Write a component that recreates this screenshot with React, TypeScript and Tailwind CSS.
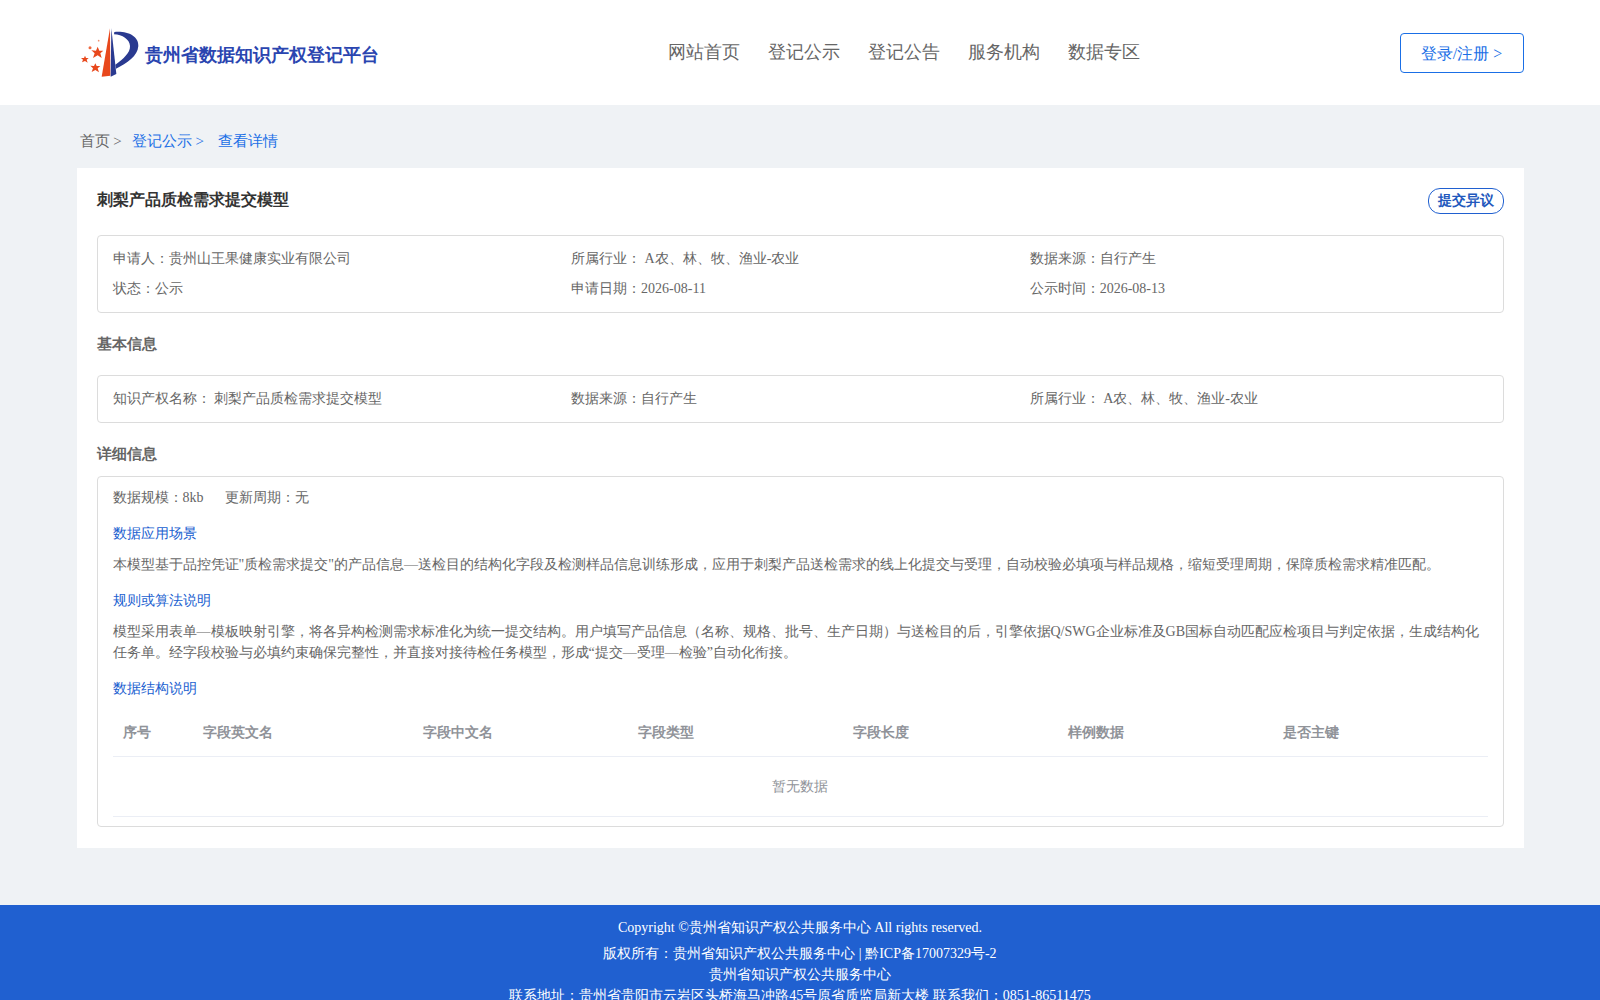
const font = "font-['Liberation_Serif',serif]";

const navItems = ["网站首页", "登记公示", "登记公告", "服务机构", "数据专区"];
const columns = [
  { label: "序号", width: "w-[80px]" },
  { label: "字段英文名", width: "w-[220px]" },
  { label: "字段中文名", width: "w-[215px]" },
  { label: "字段类型", width: "w-[215px]" },
  { label: "字段长度", width: "w-[215px]" },
  { label: "样例数据", width: "w-[215px]" },
  { label: "是否主键", width: "w-[215px]" },
];

const Logo = () => (
  <svg width="66" height="58" viewBox="0 0 198 174" className="shrink-0">
    <path d="M99 13 L74 158 L100 155 Z" fill="#e8481c" />
    <path d="M103 13 L101 158 L118 150 Z" fill="#2a3a90" />
    <path d="M112 24 C150 20 186 36 184 66 C182 96 150 118 117 134 L115 122 C140 104 160 86 159 66 C158 46 136 32 111 31 Z" fill="#2a3a90" />
    <path d="M62 68 L67 80 L79 80 L70 88 L74 102 L62 94 L48 102 L53 88 L43 79 L57 80 Z" fill="#e8481c" />
    <path d="M55 118 L59 126 L70 126 L62 133 L66 145 L55 138 L44 144 L48 133 L40 125 L51 126 Z" fill="#e8481c" />
    <path d="M24 95 L27 102 L35 102 L29 107 L32 116 L24 111 L15 115 L18 107 L12 102 L21 102 Z" fill="#e8481c" />
    <circle cx="39" cy="71" r="4.5" fill="#ee6a42" />
    <circle cx="65" cy="50" r="2.5" fill="#f0906f" />
  </svg>
);

const Cell = ({ children }: { children: React.ReactNode }) => (
  <div className="w-[458.6px] shrink-0 h-[30px] leading-[30px] text-sm text-[#666]">{children}</div>
);

const SubTitle = ({ children }: { children: React.ReactNode }) => (
  <div className="text-sm leading-[21px] text-[#2060d0]">{children}</div>
);

export default function App() {
  return (
    <div className={`${font} min-h-screen bg-[#eff2f5]`}>
      <header className="h-[105px] bg-white">
        <div className="w-[1447px] mx-auto h-full flex items-center">
          <div className="w-[591px] flex items-center">
            <Logo />
            <span className="ml-[2px] pt-[5px] text-lg font-bold text-[#2a45b0]">贵州省数据知识产权登记平台</span>
          </div>
          <nav className="flex gap-7 pb-[2px] text-lg text-[#666]">
            {navItems.map((item) => (
              <a key={item}>{item}</a>
            ))}
          </nav>
          <button className="ml-auto w-[124px] h-10 pt-[2px] rounded border border-[#1a6fe6] text-base text-[#1a6fe6] bg-white">
            登录/注册 &gt;
          </button>
        </div>
      </header>

      <main className="w-[1447px] mx-auto pb-[57px]">
        <div className="h-[63px] flex items-center pl-[3px] pt-[10px] text-[15px] text-[#666]">
          <span>首页 &gt;</span>
          <span className="ml-[10px] text-[#1a6fe6]">登记公示 &gt;</span>
          <span className="ml-[14px] text-[#1a6fe6]">查看详情</span>
        </div>

        <div className="bg-white px-5 pt-5 pb-[21px]">
          <div className="flex items-center justify-between h-[26px]">
            <h1 className="pb-[2px] text-base font-bold text-[#333]">刺梨产品质检需求提交模型</h1>
            <button className="w-[76px] h-[26px] rounded-xl border border-[#2060d0] text-sm font-bold text-[#2258bd]">
              提交异议
            </button>
          </div>

          <div className="mt-[21px] border border-[#dcdcdc] rounded px-[15px] py-2">
            <div className="flex">
              <Cell>申请人：贵州山王果健康实业有限公司</Cell>
              <Cell>所属行业： A农、林、牧、渔业-农业</Cell>
              <Cell>数据来源：自行产生</Cell>
            </div>
            <div className="flex">
              <Cell>状态：公示</Cell>
              <Cell>申请日期：2026-08-11</Cell>
              <Cell>公示时间：2026-08-13</Cell>
            </div>
          </div>

          <h2 className="mt-[21px] text-[15px] leading-[21px] font-bold text-[#666]">基本信息</h2>

          <div className="mt-5 border border-[#dcdcdc] rounded px-[15px] py-2">
            <div className="flex">
              <Cell>知识产权名称： 刺梨产品质检需求提交模型</Cell>
              <Cell>数据来源：自行产生</Cell>
              <Cell>所属行业： A农、林、牧、渔业-农业</Cell>
            </div>
          </div>

          <h2 className="mt-[21px] text-[15px] leading-[21px] font-bold text-[#666]">详细信息</h2>

          <div className="mt-[11px] border border-[#dcdcdc] rounded px-[15px] pt-[10px] pb-[9px] text-sm text-[#666]">
            <div className="flex gap-[21px] leading-[21px]">
              <span>数据规模：8kb</span>
              <span>更新周期：无</span>
            </div>
            <div className="mt-[15px]">
              <SubTitle>数据应用场景</SubTitle>
            </div>
            <p className="mt-[10px] leading-[21px]">
              本模型基于品控凭证"质检需求提交"的产品信息—送检目的结构化字段及检测样品信息训练形成，应用于刺梨产品送检需求的线上化提交与受理，自动校验必填项与样品规格，缩短受理周期，保障质检需求精准匹配。
            </p>
            <div className="mt-[15px]">
              <SubTitle>规则或算法说明</SubTitle>
            </div>
            <p className="mt-[10px] leading-[21px]">
              模型采用表单—模板映射引擎，将各异构检测需求标准化为统一提交结构。用户填写产品信息（名称、规格、批号、生产日期）与送检目的后，引擎依据Q/SWG企业标准及GB国标自动匹配应检项目与判定依据，生成结构化任务单。经字段校验与必填约束确保完整性，并直接对接待检任务模型，形成“提交—受理—检验”自动化衔接。
            </p>
            <div className="mt-[15px]">
              <SubTitle>数据结构说明</SubTitle>
            </div>

            <div className="mt-[11px]">
              <div className="flex h-[47px] items-center border-b border-[#ebeef5] font-bold text-[#909399]">
                {columns.map((col) => (
                  <div key={col.label} className={`${col.width} px-[10px]`}>
                    {col.label}
                  </div>
                ))}
              </div>
              <div className="h-[60px] pt-[1px] flex items-center justify-center border-b border-[#ebeef5] text-[#909399]">
                暂无数据
              </div>
            </div>
          </div>
        </div>
      </main>

      <footer className="bg-[#2060d0] text-white text-sm text-center pt-[12px] pb-[20px]">
        <div className="leading-[21px]">Copyright ©贵州省知识产权公共服务中心 All rights reserved.</div>
        <div className="mt-[5px] leading-[21px]">版权所有：贵州省知识产权公共服务中心 | 黔ICP备17007329号-2</div>
        <div className="leading-[21px]">贵州省知识产权公共服务中心</div>
        <div className="leading-[21px]">联系地址：贵州省贵阳市云岩区头桥海马冲路45号原省质监局新大楼 联系我们：0851-86511475</div>
      </footer>
    </div>
  );
}
